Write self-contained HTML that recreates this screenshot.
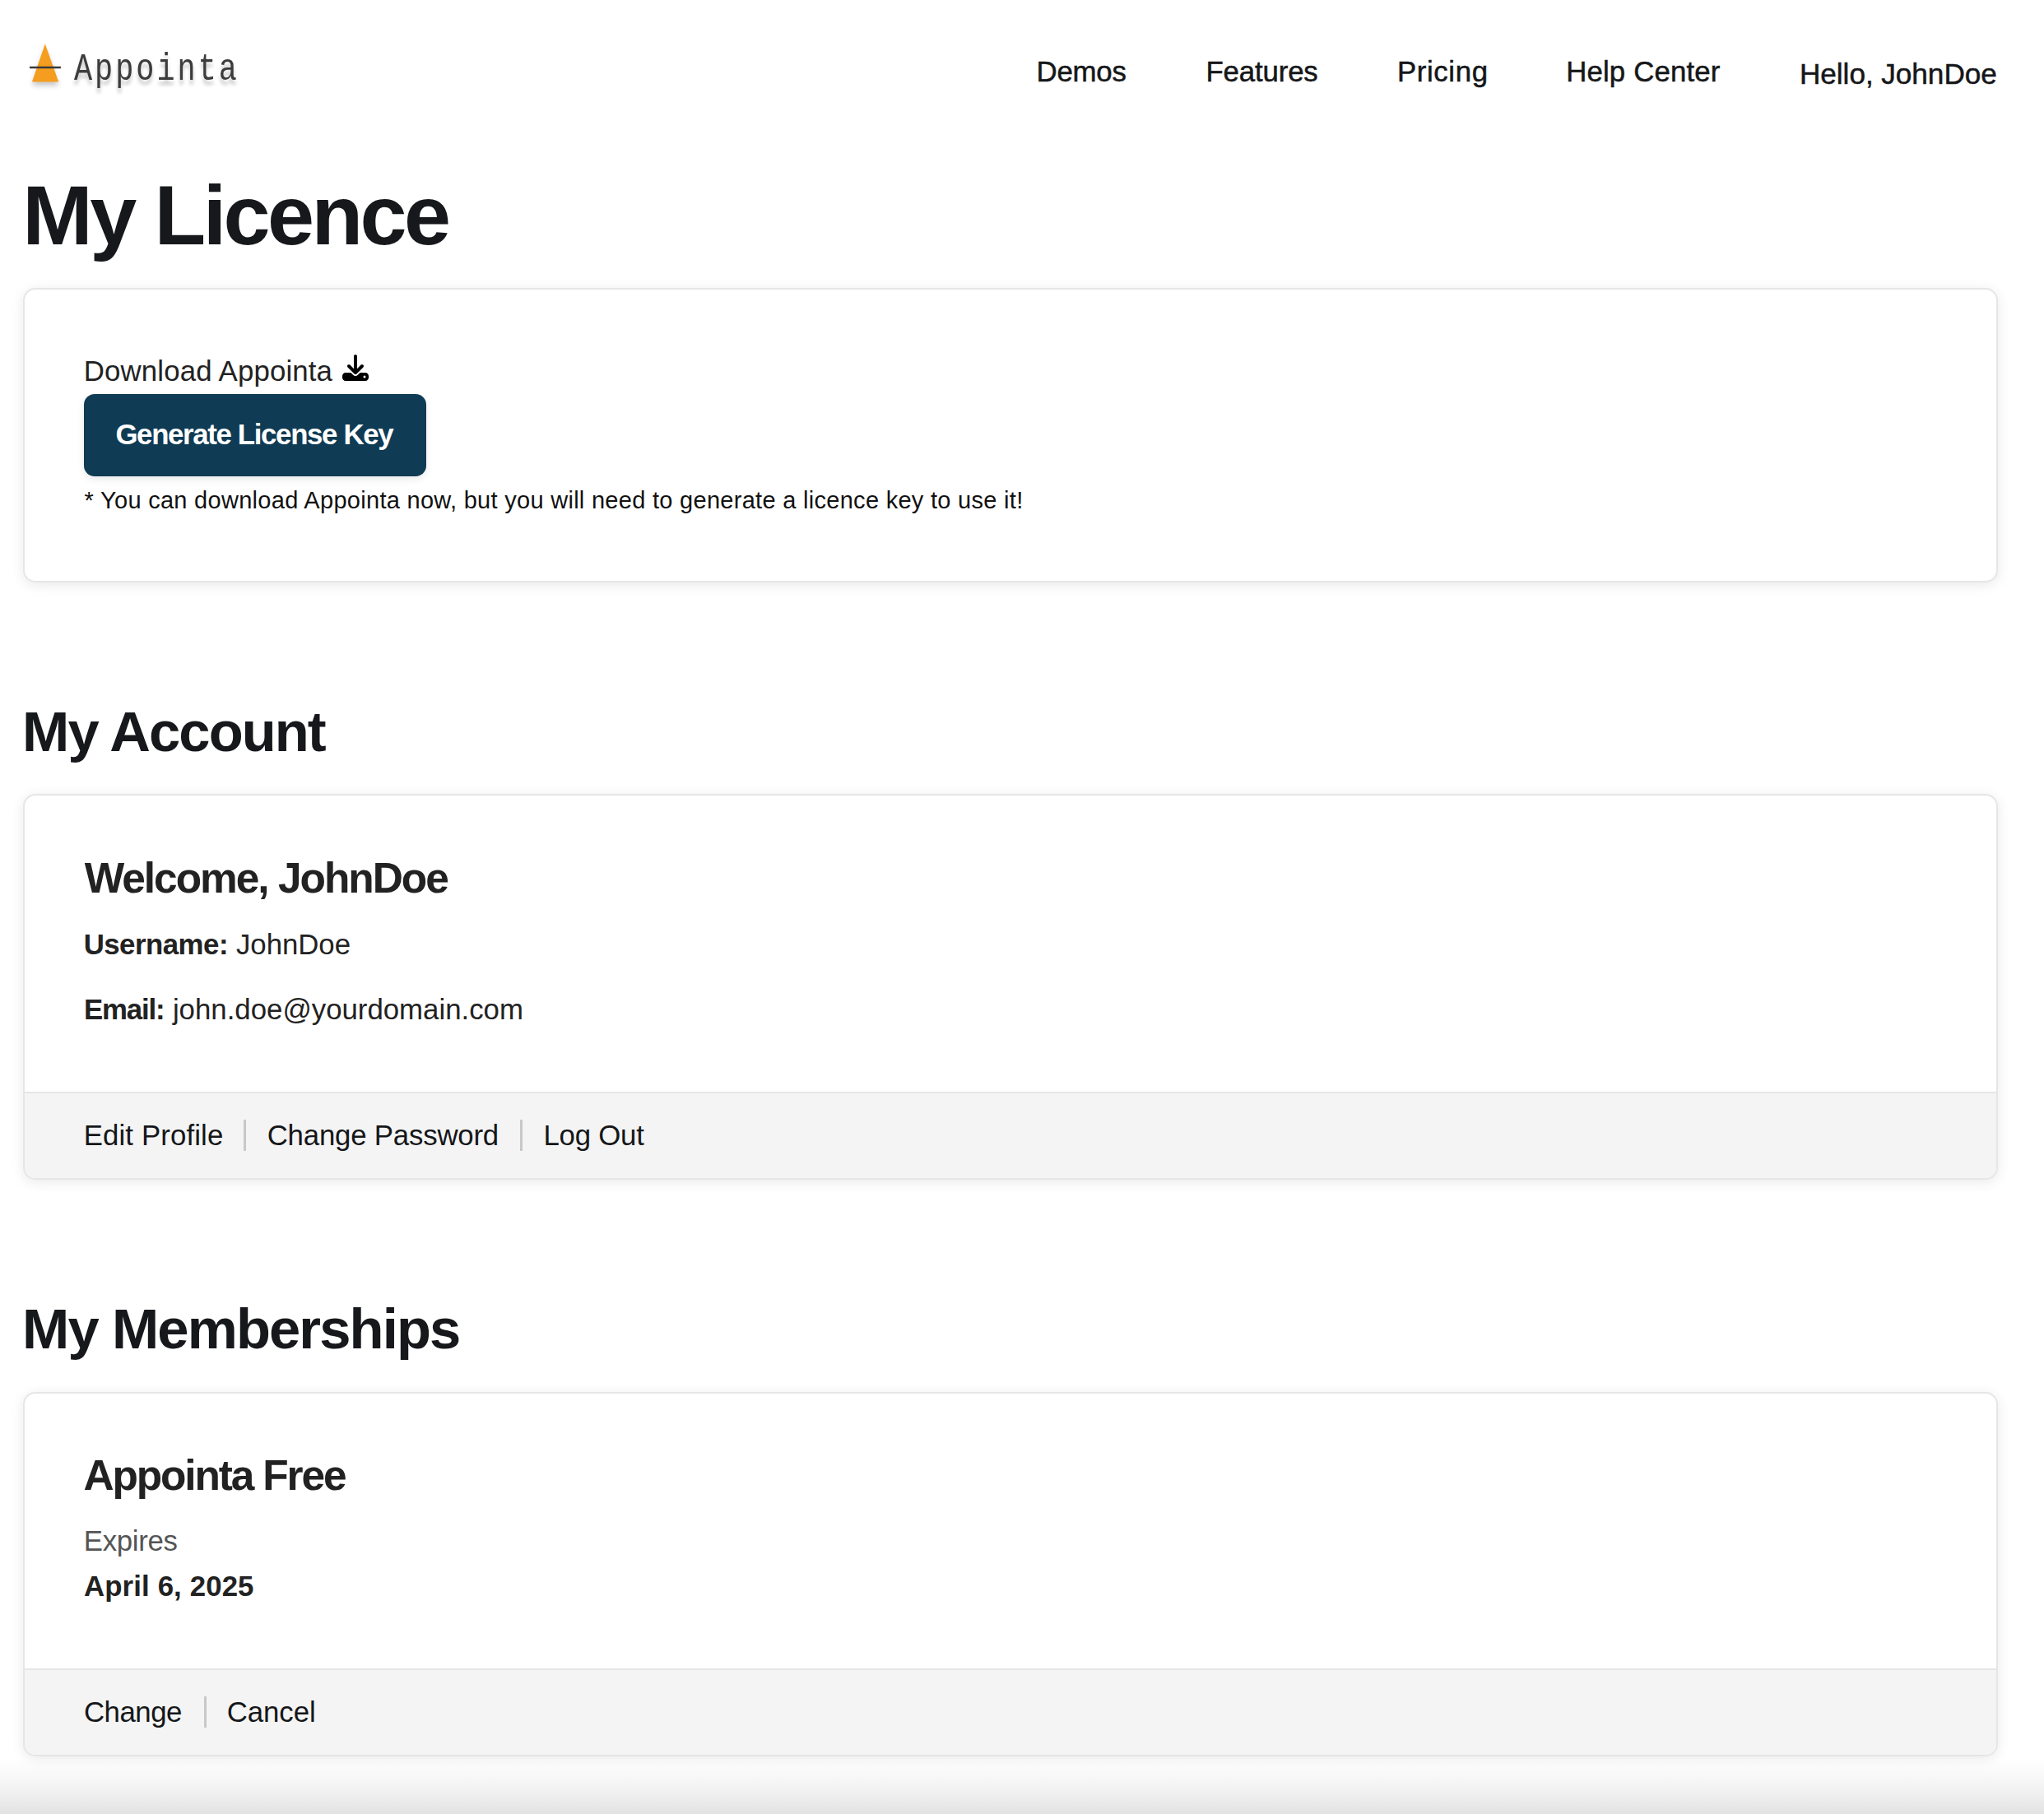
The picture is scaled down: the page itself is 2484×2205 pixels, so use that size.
<!DOCTYPE html>
<html>
<head>
<meta charset="utf-8">
<style>
html,body{margin:0;padding:0;}
body{width:2484px;height:2205px;position:relative;overflow:hidden;background:#fff;font-family:"Liberation Sans",sans-serif;color:#16181b;}
.t{position:absolute;white-space:nowrap;line-height:1;}
.nav{font-size:34.8px;color:#151719;}
.b{font-weight:700;}
.med{-webkit-text-stroke:0.5px currentColor;}
.card{position:absolute;left:28px;width:2396px;border:2px solid #e6e6e6;border-radius:15px;background:#fff;box-shadow:0 3px 16px rgba(0,0,0,0.09);overflow:hidden;}
.foot{position:absolute;left:0;right:0;bottom:0;background:#f4f4f4;border-top:2px solid #e6e6e6;}
.sep{position:absolute;width:3px;background:#c8c8c8;}
.txt{color:#222;}
</style>
</head>
<body>
<!-- logo -->
<svg style="position:absolute;left:30px;top:48px;overflow:visible" width="52" height="62" viewBox="0 0 52 62">
  <defs><filter id="sh" x="-50%" y="-50%" width="200%" height="200%"><feGaussianBlur stdDeviation="3"/></filter></defs>
  <polygon points="24.8,10 41.2,56 9,56" fill="#000" opacity="0.22" filter="url(#sh)"/>
  <polygon points="24.8,5.2 41.2,51.4 9,51.4" fill="#f59d1e"/>
  <line x1="6" y1="34" x2="43.9" y2="34" stroke="#3a3a3a" stroke-width="2.3"/>
</svg>
<div class="t" id="logo" style="left:90px;top:61.8px;font-family:'Liberation Mono',monospace;font-size:46px;letter-spacing:3.8px;color:#3c3c3c;text-shadow:0 6px 5px rgba(0,0,0,0.22);transform:scaleX(0.8);transform-origin:0 0;">Appointa</div>

<!-- nav -->
<div class="t nav med" style="left:1259.5px;top:70.4px;letter-spacing:-0.2px">Demos</div>
<div class="t nav med" style="left:1465.5px;top:70.4px;letter-spacing:-0.15px">Features</div>
<div class="t nav med" style="left:1698px;top:70.4px;letter-spacing:0.61px">Pricing</div>
<div class="t nav med" style="left:1903.2px;top:70.4px;letter-spacing:0.15px">Help Center</div>
<div class="t nav med" style="left:2187px;top:72px;font-size:35.2px;letter-spacing:-0.06px">Hello, JohnDoe</div>

<!-- My Licence -->
<div class="t b" style="left:27.3px;top:211.3px;font-size:102.6px;letter-spacing:-3.59px;">My Licence</div>

<div class="card" style="top:350px;height:354px;">
</div>
<div class="t txt" style="left:101.7px;top:434.4px;font-size:34.8px;letter-spacing:0.15px">Download Appointa</div>
<svg style="position:absolute;left:416px;top:431px" width="32" height="32" viewBox="0 0 512 512"><path fill="#000" d="M288 32c0-17.7-14.3-32-32-32s-32 14.3-32 32V274.7l-73.4-73.4c-12.5-12.5-32.8-12.5-45.3 0s-12.5 32.8 0 45.3l128 128c12.5 12.5 32.8 12.5 45.3 0l128-128c12.5-12.5 12.5-32.8 0-45.3s-32.8-12.5-45.3 0L288 274.7V32zM64 352c-35.3 0-64 28.7-64 64v32c0 35.3 28.7 64 64 64H448c35.3 0 64-28.7 64-64V416c0-35.3-28.7-64-64-64H346.5l-45.3 45.3c-25 25-65.5 25-90.5 0L165.5 352H64zm368 56a24 24 0 1 1 0 48 24 24 0 1 1 0-48z"/></svg>
<div style="position:absolute;left:102px;top:479px;width:416px;height:100px;border-radius:13px;background:#0f3b54;box-shadow:0 4px 10px rgba(0,0,0,0.08);"></div>
<div class="t b" style="left:140.4px;top:511.3px;font-size:34.8px;color:#fff;letter-spacing:-1.34px;">Generate License Key</div>
<div class="t" style="left:102.6px;top:594.3px;font-size:29px;letter-spacing:0.29px;color:#111;">* You can download Appointa now, but you will need to generate a licence key to use it!</div>

<!-- My Account -->
<div class="t b" style="left:27.1px;top:856px;font-size:68.7px;letter-spacing:-1.9px;">My Account</div>
<div class="card" style="top:965px;height:465px;">
  <div class="foot" style="height:103px;"></div>
</div>
<div class="t b txt" style="left:102.7px;top:1041.6px;font-size:51.4px;letter-spacing:-2.0px;">Welcome, JohnDoe</div>
<div class="t txt b" style="left:101.65px;top:1131.3px;font-size:34.8px;letter-spacing:-0.5px">Username:</div>
<div class="t txt" style="left:287px;top:1131.3px;font-size:34.8px;letter-spacing:-0.05px">JohnDoe</div>
<div class="t txt b" style="left:102px;top:1210.1px;font-size:34.8px;letter-spacing:-1.16px">Email:</div>
<div class="t txt" style="left:209.9px;top:1210.1px;font-size:34.8px;">john.doe@yourdomain.com</div>
<div class="t nav" style="left:101.7px;top:1363.4px;letter-spacing:0.12px">Edit Profile</div>
<div class="sep" style="left:296px;top:1361px;height:38px;"></div>
<div class="t nav" style="left:324.7px;top:1363.4px;letter-spacing:-0.2px">Change Password</div>
<div class="sep" style="left:632px;top:1361px;height:38px;"></div>
<div class="t nav" style="left:660.4px;top:1363.4px;letter-spacing:-0.23px">Log Out</div>

<!-- My Memberships -->
<div class="t b" style="left:27.1px;top:1582px;font-size:68.7px;letter-spacing:-1.86px;">My Memberships</div>
<div class="card" style="top:1692px;height:439px;">
  <div class="foot" style="height:103px;"></div>
</div>
<div class="t b txt" style="left:101.4px;top:1768.1px;font-size:51.4px;letter-spacing:-2.11px;">Appointa Free</div>
<div class="t" style="left:101.8px;top:1856.4px;font-size:34.8px;color:#555;letter-spacing:-0.32px">Expires</div>
<div class="t b txt" style="left:102px;top:1911.4px;font-size:34.8px;letter-spacing:0.12px">April 6, 2025</div>
<div class="t nav" style="left:101.9px;top:2064.4px;letter-spacing:-0.47px">Change</div>
<div class="sep" style="left:248px;top:2062px;height:38px;"></div>
<div class="t nav" style="left:275.8px;top:2064.4px;letter-spacing:-0.1px">Cancel</div>

<!-- bottom fade -->
<div style="position:absolute;left:0;right:0;top:2138px;height:67px;background:linear-gradient(to bottom,rgba(0,0,0,0) 0%,rgba(0,0,0,0.035) 40%,rgba(0,0,0,0.063) 65%,rgba(0,0,0,0.114) 100%);"></div>
</body>
</html>
